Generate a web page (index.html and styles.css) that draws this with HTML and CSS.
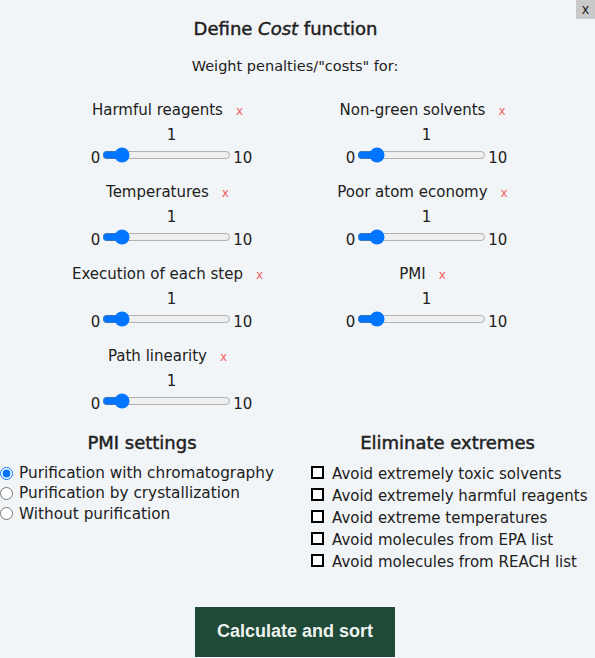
FILE: index.html
```html
<!DOCTYPE html>
<html lang="en">
<head>
<meta charset="utf-8">
<title>Define Cost function</title>
<link rel="stylesheet" href="styles.css">
</head>
<body>
<div class="modal">
  <button class="close" type="button">x</button>
  <h2 class="title">Define <em>Cost</em> function</h2>
  <p class="subtitle">Weight penalties/"costs" for:</p>

  <div class="weights">
    <div class="col">
      <div class="item">
        <div class="label-row"><span class="label">Harmful reagents</span><span class="remove">x</span></div>
        <div class="value">1</div>
        <div class="slider-row"><span class="num">0</span><input type="range" min="0" max="10" value="1"><span class="num">10</span></div>
      </div>
      <div class="item">
        <div class="label-row"><span class="label">Temperatures</span><span class="remove">x</span></div>
        <div class="value">1</div>
        <div class="slider-row"><span class="num">0</span><input type="range" min="0" max="10" value="1"><span class="num">10</span></div>
      </div>
      <div class="item">
        <div class="label-row"><span class="label">Execution of each step</span><span class="remove">x</span></div>
        <div class="value">1</div>
        <div class="slider-row"><span class="num">0</span><input type="range" min="0" max="10" value="1"><span class="num">10</span></div>
      </div>
      <div class="item">
        <div class="label-row"><span class="label">Path linearity</span><span class="remove">x</span></div>
        <div class="value">1</div>
        <div class="slider-row"><span class="num">0</span><input type="range" min="0" max="10" value="1"><span class="num">10</span></div>
      </div>
    </div>
    <div class="col">
      <div class="item">
        <div class="label-row"><span class="label">Non-green solvents</span><span class="remove">x</span></div>
        <div class="value">1</div>
        <div class="slider-row"><span class="num">0</span><input type="range" min="0" max="10" value="1"><span class="num">10</span></div>
      </div>
      <div class="item">
        <div class="label-row"><span class="label">Poor atom economy</span><span class="remove">x</span></div>
        <div class="value">1</div>
        <div class="slider-row"><span class="num">0</span><input type="range" min="0" max="10" value="1"><span class="num">10</span></div>
      </div>
      <div class="item">
        <div class="label-row"><span class="label">PMI</span><span class="remove">x</span></div>
        <div class="value">1</div>
        <div class="slider-row"><span class="num">0</span><input type="range" min="0" max="10" value="1"><span class="num">10</span></div>
      </div>
    </div>
  </div>

  <div class="options">
    <div class="pmi">
      <h3 class="section-title">PMI settings</h3>
      <label class="radio"><input type="radio" name="pmi" checked>Purification with chromatography</label>
      <label class="radio"><input type="radio" name="pmi">Purification by crystallization</label>
      <label class="radio"><input type="radio" name="pmi">Without purification</label>
    </div>
    <div class="extremes">
      <h3 class="section-title">Eliminate extremes</h3>
      <div class="check-list">
        <label class="check"><input type="checkbox">Avoid extremely toxic solvents</label>
        <label class="check"><input type="checkbox">Avoid extremely harmful reagents</label>
        <label class="check"><input type="checkbox">Avoid extreme temperatures</label>
        <label class="check"><input type="checkbox">Avoid molecules from EPA list</label>
        <label class="check"><input type="checkbox">Avoid molecules from REACH list</label>
      </div>
    </div>
  </div>

  <div class="actions">
    <button class="calc" type="button">Calculate and sort</button>
  </div>
</div>
</body>
</html>
```

FILE: styles.css
```css
html, body {
  margin: 0;
  padding: 0;
}

body {
  background: #f2f5f7;
  color: #212121;
  font-family: "DejaVu Sans", "Noto Sans", sans-serif;
  overflow: hidden;
}

.modal {
  position: relative;
  width: 595px;
  padding-top: 17px;
  box-sizing: border-box;
}

.close {
  position: absolute;
  top: 0;
  right: 0;
  width: 19px;
  height: 19px;
  padding: 0;
  border: 0;
  background: #c9c9c9;
  color: #222;
  font: 14px/17px "Liberation Sans", Arial, sans-serif;
}

.title {
  margin: 0;
  padding-right: 24px;
  text-align: center;
  font-size: 18px;
  line-height: 24px;
  font-weight: normal;
  -webkit-text-stroke: 0.45px currentColor;
}

.subtitle {
  margin: 15px 0 0;
  padding-right: 5px;
  text-align: center;
  font-size: 14.5px;
  line-height: 20px;
}

.weights {
  display: flex;
  width: 510px;
  margin: 24px 0 0 44px;
}

.col {
  flex: 1;
  display: flex;
  flex-direction: column;
}

.item {
  height: 82px;
  display: flex;
  flex-direction: column;
  align-items: center;
}

.label-row {
  display: flex;
  align-items: baseline;
  font-size: 15px;
  line-height: 20px;
}

.remove {
  margin-left: 13px;
  padding-right: 8px;
  font-size: 12px;
  color: #ee6262;
}

.value {
  margin-top: 4px;
  font-size: 15px;
  line-height: 20px;
}

.slider-row {
  display: flex;
  align-items: center;
  height: 20px;
  font-size: 15px;
}

.num {
  line-height: 18px;
  padding-top: 5px;
}

.slider-row input {
  width: 129px;
  margin: 2px;
}

.options {
  display: grid;
  grid-template-columns: 284px 295px;
  column-gap: 16px;
  margin-top: 3px;
}

.section-title {
  margin: 0 0 8px;
  text-align: center;
  font-size: 18px;
  line-height: 24px;
  font-weight: normal;
  -webkit-text-stroke: 0.45px currentColor;
}

.radio {
  display: flex;
  align-items: center;
  height: 20.4px;
  font-size: 15.3px;
  line-height: 20.4px;
}

.radio input {
  width: 13px;
  height: 13px;
  margin: 0 6px 0 0;
}

.check-list {
  padding-left: 11px;
}

.check {
  display: flex;
  align-items: center;
  height: 22px;
  font-size: 15px;
  line-height: 22px;
}

.check input {
  appearance: none;
  -webkit-appearance: none;
  box-sizing: border-box;
  width: 13px;
  height: 13px;
  margin: 0 8px 3px 0;
  border: 2px solid #000;
  border-radius: 0;
  background: #fff;
}

.actions {
  display: flex;
  justify-content: center;
  padding-right: 5px;
  margin-top: 34px;
}

.calc {
  width: 200px;
  padding: 14px 0 15px;
  border: 0;
  background: #1e4a37;
  color: #eef2f0;
  font: bold 18px/21px "Liberation Sans", Arial, sans-serif;
}
```
